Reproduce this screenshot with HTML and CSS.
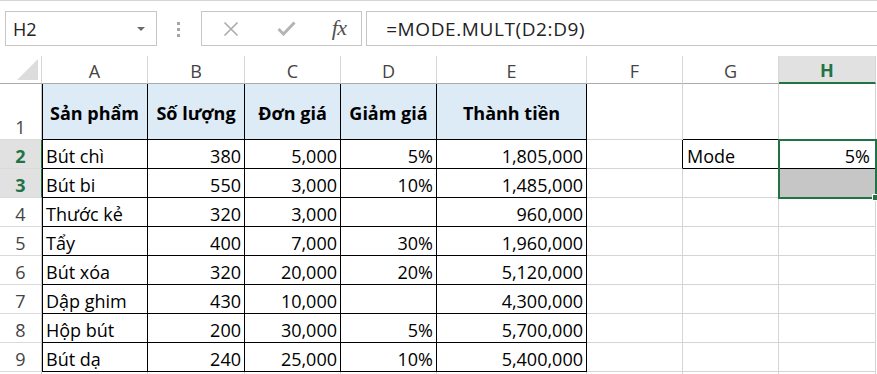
FILE: index.html
```html
<!DOCTYPE html>
<html lang="vi">
<head>
<meta charset="utf-8">
<title>MODE.MULT</title>
<link rel="stylesheet" href="styles.css">
</head>
<body>
<div class="app">
  <div class="fbar">
    <div class="namebox"><span class="nb-text">H2</span><span class="nb-arrow"></span></div>
    <div class="grip"><span></span><span></span><span></span></div>
    <div class="btns">
      <svg class="ic-x" width="16" height="16" viewBox="0 0 16 16"><path d="M1.5 1.5 L14.5 14.5 M14.5 1.5 L1.5 14.5" stroke="#ababab" stroke-width="1.6" fill="none"/></svg>
      <svg class="ic-ok" width="19" height="15" viewBox="0 0 19 15"><path d="M1.5 8 L6.5 13 L17.5 1.5" stroke="#b4b4b4" stroke-width="3" fill="none"/></svg>
      <span class="fx">fx</span>
    </div>
    <div class="formula">=MODE.MULT(D2:D9)</div>
  </div>

  <div class="sheet">
    <div class="corner"><span class="tri"></span></div>
    <div class="ch">A</div><div class="ch">B</div><div class="ch">C</div><div class="ch">D</div><div class="ch">E</div><div class="ch">F</div><div class="ch">G</div><div class="ch sel">H</div>

    <div class="rh">1</div>
    <div class="c t hd l">Sản phẩm</div><div class="c t hd">Số lượng</div><div class="c t hd">Đơn giá</div><div class="c t hd">Giảm giá</div><div class="c t hd">Thành tiền</div>
    <div class="c"></div><div class="c bb"></div><div class="c bb"></div>

    <div class="rh sel">2</div>
    <div class="c t l">Bút chì</div><div class="c t r">380</div><div class="c t r">5,000</div><div class="c t r">5%</div><div class="c t r">1,805,000</div>
    <div class="c br"></div><div class="c bb">Mode</div><div class="c bb r h2">5%</div>

    <div class="rh sel">3</div>
    <div class="c t l">Bút bi</div><div class="c t r">550</div><div class="c t r">3,000</div><div class="c t r">10%</div><div class="c t r">1,485,000</div>
    <div class="c"></div><div class="c"></div><div class="c gray"></div>

    <div class="rh">4</div>
    <div class="c t l">Thước kẻ</div><div class="c t r">320</div><div class="c t r">3,000</div><div class="c t r"></div><div class="c t r">960,000</div>
    <div class="c"></div><div class="c"></div><div class="c"></div>

    <div class="rh">5</div>
    <div class="c t l">Tẩy</div><div class="c t r">400</div><div class="c t r">7,000</div><div class="c t r">30%</div><div class="c t r">1,960,000</div>
    <div class="c"></div><div class="c"></div><div class="c"></div>

    <div class="rh">6</div>
    <div class="c t l">Bút xóa</div><div class="c t r">320</div><div class="c t r">20,000</div><div class="c t r">20%</div><div class="c t r">5,120,000</div>
    <div class="c"></div><div class="c"></div><div class="c"></div>

    <div class="rh">7</div>
    <div class="c t l">Dập ghim</div><div class="c t r">430</div><div class="c t r">10,000</div><div class="c t r"></div><div class="c t r">4,300,000</div>
    <div class="c"></div><div class="c"></div><div class="c"></div>

    <div class="rh">8</div>
    <div class="c t l">Hộp bút</div><div class="c t r">200</div><div class="c t r">30,000</div><div class="c t r">5%</div><div class="c t r">5,700,000</div>
    <div class="c"></div><div class="c"></div><div class="c"></div>

    <div class="rh">9</div>
    <div class="c t l">Bút dạ</div><div class="c t r">240</div><div class="c t r">25,000</div><div class="c t r">10%</div><div class="c t r">5,400,000</div>
    <div class="c"></div><div class="c"></div><div class="c"></div>

    <div class="rh"></div>
    <div class="c"></div><div class="c"></div><div class="c"></div><div class="c"></div><div class="c"></div><div class="c"></div><div class="c"></div><div class="c"></div>

    <div class="selbox"><span class="handle"></span></div>
  </div>
</div>
</body>
</html>
```

FILE: styles.css
```css
* { box-sizing: border-box; }
html, body { margin: 0; padding: 0; background: #fff; overflow: hidden; }
body { width: 877px; height: 374px; font-family: "Open Sans", "Noto Sans", sans-serif; font-size: 18px; color: #000; }

.app { border-top: 1px solid #d6d6d6; height: 374px; overflow: hidden; }

.fbar {
  display: flex;
  align-items: flex-start;
  height: 55px;
  padding: 10px 0 0 5px;
}
.namebox {
  width: 154px; height: 35px;
  border: 1px solid #c6c6c6;
  display: flex; align-items: center; justify-content: space-between;
  padding: 0 11px 0 7px;
  color: #222;
}
.nb-arrow {
  width: 0; height: 0;
  border-left: 4px solid transparent; border-right: 4px solid transparent;
  border-top: 4px solid #6b6b6b;
  margin-top: 1px;
}
.grip {
  width: 45px; height: 35px;
  display: flex; flex-direction: column; align-items: center; justify-content: center; gap: 3px;
  padding-top: 1px;
}
.grip span { width: 3px; height: 3px; background: #a6a6a6; }
.btns {
  width: 164px; height: 35px;
  border: 1px solid #c6c6c6;
  display: flex; align-items: center;
  padding-left: 21px;
}
.ic-x { margin-right: 38px; }
.ic-ok { margin-right: 36px; }
.fx {
  font-family: "Liberation Serif", "DejaVu Serif", serif;
  font-style: italic; font-size: 22px; color: #505050;
  letter-spacing: -0.5px;
  margin-top: -2px;
}
.formula {
  margin-left: 4px;
  width: 520px; height: 35px;
  border: 1px solid #c6c6c6;
  border-right: none;
  display: flex; align-items: center;
  padding-left: 19px;
  font-size: 19px;
  letter-spacing: 0.6px;
  color: #222;
}

.sheet {
  position: relative;
  display: grid;
  grid-template-columns: 42px 106px 97px 96px 96px 150px 96px 96px 97px;
  grid-template-rows: 28px 56px repeat(9, 29px);
}
.corner {
  border-right: 1px solid #d6d6d6;
  border-bottom: 1px solid #ababab;
  display: flex; align-items: flex-end; justify-content: flex-end;
  padding: 0 3px 3px 0;
}
.tri {
  width: 21px; height: 21px;
  background: #dcdcdc;
  clip-path: polygon(100% 0, 100% 100%, 0 100%);
}
.ch {
  border-right: 1px solid #d6d6d6;
  border-bottom: 1px solid #ababab;
  display: flex; align-items: flex-end; justify-content: center;
  color: #444;
}
.ch.sel {
  background: #e1e1e1;
  color: #217346; font-weight: 700;
  border-bottom: 2px solid #217346;
}
.rh {
  border-right: 1px solid #c8c8c8;
  border-bottom: 1px solid #dadada;
  display: flex; align-items: flex-end; justify-content: center;
  color: #444;
}
.rh.sel {
  background: #e1e1e1;
  color: #217346; font-weight: 700;
  border-right: 1px solid #217346;
}
.c {
  border-right: 1px solid #d4d4d4;
  border-bottom: 1px solid #d4d4d4;
  display: flex; align-items: flex-end;
  padding: 0 4px;
  white-space: nowrap;
  overflow: hidden;
}
.c.t { border-right-color: #000; border-bottom-color: #000; }
.c.l { border-left: 1px solid #000; padding-left: 3px; }
.c.r { justify-content: flex-end; padding-right: 3px; }
.c.hd {
  background: #ddebf7;
  font-weight: 700;
  justify-content: center;
  align-items: center;
  padding-top: 3px;
}
.c.bb { border-bottom-color: #000; }
.c.br { border-right-color: #000; }
.c.h2 { padding-right: 5px; }
.c.gray { background: #c6c6c6; }

.selbox {
  position: absolute;
  left: 778px; top: 83px;
  width: 99px; height: 60px;
  border: 2px solid #217346;
  pointer-events: none;
}
.handle {
  position: absolute;
  right: -4px; bottom: -4px;
  width: 7px; height: 7px;
  background: #217346;
  border: 1px solid #fff;
}
```
